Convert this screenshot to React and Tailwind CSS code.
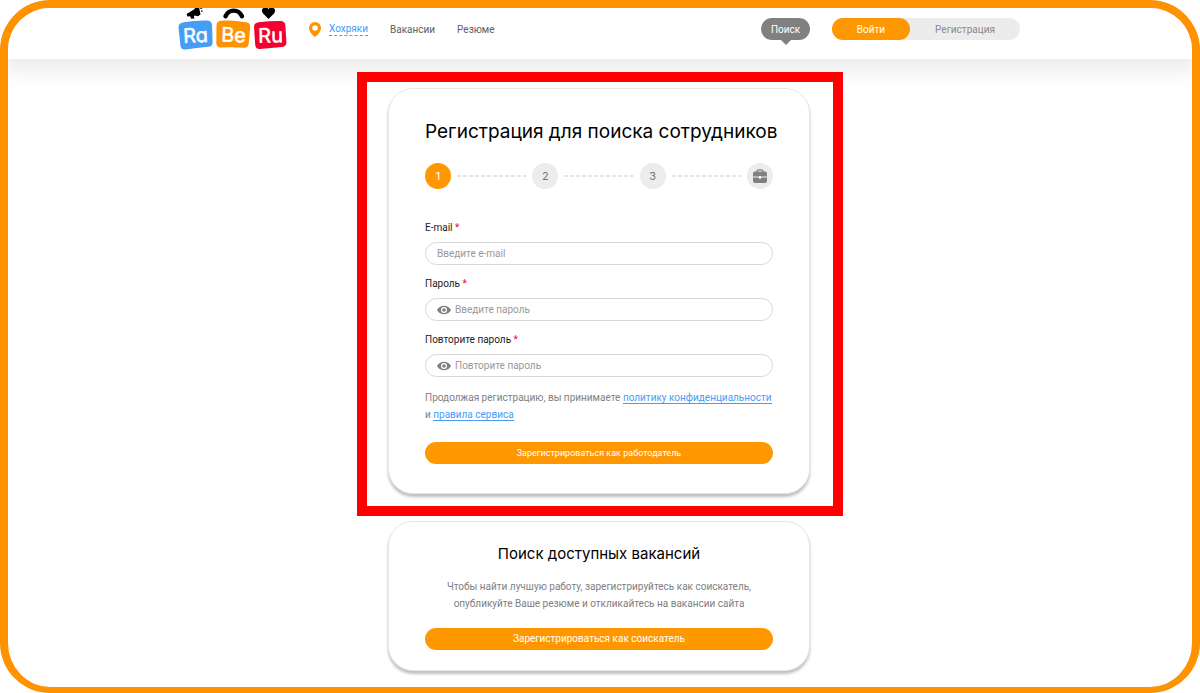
import React from "react";

function Logo() {
  return (
    <a href="#" aria-label="RaBeRu" className="block w-[110px] shrink-0">
      <svg viewBox="1 0 110 42" className="block w-full">
        <g fill="#000">
          <path d="M9.500 6L17 1.500 19 -1h3l1.500 7.500-2.500 1.700-3.500-.7-.6 1 .6 2-3.200.3-1.300-2.600-2.600.3z" />
          <path d="M23.500 .8l1.500-1M24 3.200l1.600 0" stroke="#000" strokeWidth="1.200" />
          <path d="M48.500 8.200C52 .8 61.500 .8 65 8.200" fill="none" stroke="#000" strokeWidth="4.400" strokeLinecap="round" />
          <path d="M91.500 11l-5.400-5.500C83.500 2.500 85.500-.5 88.500-.5c1.500 0 2.500.7 3 1.700.5-1 1.600-1.700 3-1.700 3 0 5 3 2.500 6z" />
        </g>
        <path d="M7 14.200Q18 12.200 30 12.400q4.700 0 5 4.500l.6 17q.2 4.500-4.300 4.900Q19 39.800 8.500 41.400q-4.600.5-5.100-4.200L1.500 19.700Q1 15 7 14.200z" fill="#459df5" />
        <path d="M44.500 12.700Q57 12 69 14.200q4.500.6 4.200 5l-1.500 16.400q-.4 4.400-4.800 4.200Q56 38.900 44 39.500q-4.500.2-4.700-4.400L39.500 17.500q0-4.600 5-4.800z" fill="#ff9200" />
        <path d="M82 14.200Q93 12.700 103.500 12.900q4.600 0 4.900 4.500l1 16.600q.1 4.500-4.300 5Q93.500 39.900 83 41q-4.400.2-4.800-4.300L77 19q-.2-4.300 5-4.800z" fill="#f50031" />
        <g
          fill="#fff"
          stroke="#fff"
          strokeWidth="0.5"
          strokeLinejoin="round"
          fontSize="20"
          fontWeight="400"
          textAnchor="middle"
          className="font-['Inter',sans-serif] [font-feature-settings:'cv11']"
        >
          <text x="18.500" y="34.500" transform="rotate(-3 18 27)">Ra</text>
          <text x="56.500" y="34" transform="rotate(2 56 27)">Be</text>
          <text x="93.500" y="34.500" transform="rotate(-1 93 27)">Ru</text>
        </g>
      </svg>
    </a>
  );
}

function Eye() {
  return (
    <svg viewBox="0 0 14 10" className="w-[14px] shrink-0" aria-hidden="true">
      <path d="M0 5C3-.8 11-.8 14 5 11 10.800 3 10.800 0 5z" fill="#808080" />
      <circle cx="7" cy="5" r="3" fill="#fff" />
      <circle cx="7" cy="5" r="1.800" fill="#808080" />
    </svg>
  );
}

function Field({ id, label, type, placeholder, eye }) {
  return (
    <div className="flex flex-col gap-[5px]">
      <label htmlFor={id} className="text-[10px] leading-[18px] text-[#1c1c24]">
        {label} <span className="text-[#f50031]">*</span>
      </label>
      <div className="flex h-[23px] items-center gap-1 rounded-full border border-[#d8d8d8] px-[11px]">
        {eye && (
          <button type="button" aria-label="Показать пароль">
            <Eye />
          </button>
        )}
        <input
          id={id}
          type={type}
          placeholder={placeholder}
          className="h-4 min-w-0 flex-1 bg-transparent text-[10px] leading-4 outline-none placeholder:text-[#999]"
        />
      </div>
    </div>
  );
}

function Step({ active, children }) {
  return (
    <li
      className={
        active
          ? "flex size-[26px] shrink-0 items-center justify-center rounded-full bg-[#ff9800] font-['Inter',sans-serif] text-[11px] text-white"
          : "flex size-[26px] shrink-0 items-center justify-center rounded-full bg-[#ececec] font-['Inter',sans-serif] text-[11px] text-[#757575]"
      }
    >
      {children}
    </li>
  );
}

function Dashes() {
  return (
    <li aria-hidden="true" className="mx-1.5 flex-1">
      <svg className="block h-[2px] w-full">
        <line x1="0" y1="1" x2="100%" y2="1" stroke="#e4e4e4" strokeWidth="2" strokeDasharray="4 2" />
      </svg>
    </li>
  );
}

function Briefcase() {
  return (
    <svg viewBox="0 0 14 14" className="w-[14px]" aria-label="Работа">
      <path d="M4 3.500V2.500Q4 .8 5.500.8h3Q10 .8 10 2.500v1" fill="none" stroke="#808080" strokeWidth="1.200" />
      <path d="M2 2.600h10q2 0 2 2v3H8.500L7 9 5.500 7.600H0v-3q0-2 2-2z" fill="#808080" />
      <path d="M0 8.600h5L7 10.300l2-1.700h5V12q0 2-2 2H2q-2 0-2-2z" fill="#808080" />
      <path d="M6 7h2v1.200L7 9.200 6 8.200z" fill="#fff" />
    </svg>
  );
}

const card =
  "rounded-[25px] border border-[#e6e6e6] bg-white px-9 shadow-[0_3px_3px_rgba(0,0,0,0.25)]";
const submit =
  "block h-[22px] w-full rounded-full bg-[#ff9800] leading-[22px] text-white";

export default function App() {
  return (
    <div className="flex min-h-screen flex-col overflow-hidden rounded-[50px] border-8 border-b-[6px] border-[#ff9200] bg-white font-['Roboto',sans-serif]">
      <header className="bg-white shadow-[0_6px_20px_6px_rgba(0,0,0,0.08)]">
        <div className="mx-auto flex h-[51px] w-full max-w-[844px] items-start pr-0.5 text-[10px] leading-4 text-[#606060]">
          <Logo />
          <a href="#" className="mt-3.5 ml-[21px] flex items-center gap-2">
            <svg viewBox="0 0 12 15" className="w-3" aria-hidden="true">
              <path fillRule="evenodd" d="M6 0a6 6 0 0 1 6 6c0 3.500-3 6.800-6 9-3-2.200-6-5.500-6-9a6 6 0 0 1 6-6zm0 3.200a2.800 2.800 0 1 0 0 5.600 2.800 2.800 0 0 0 0-5.600z" fill="#ff9200" />
            </svg>
            <span className="border-b border-dashed border-[#459df5] leading-[12px] text-[#459df5]">Хохряки</span>
          </a>
          <nav className="mt-3.5 ml-[22px] flex gap-[22px]">
            <a href="#">Вакансии</a>
            <a href="#">Резюме</a>
          </nav>
          <div className="mt-2.5 ml-auto flex gap-[22px]">
            <button className="relative h-[22px] w-[49px] rounded-full bg-[#808080] pt-px text-white">
              Поиск
              <span className="absolute top-full left-1/2 h-0 w-0 -translate-x-1/2 border-x-[5px] border-t-[5px] border-x-transparent border-t-[#808080]" />
            </button>
            <div className="flex h-[22px] w-[188px] rounded-full bg-[#ececec]">
              <button className="w-[78px] rounded-full bg-[#ff9800] pt-px text-white">Войти</button>
              <button className="flex-1 pt-px text-[#8a8a8a]">Регистрация</button>
            </div>
          </div>
        </div>
      </header>

      <main className="mx-auto flex w-full max-w-[486px] flex-col gap-[5px] pt-[13px] pb-4">
        <div className="relative border-10 border-[#ff0000] bg-white pt-1.5 pr-[23px] pb-3 pl-[21px]">
          <section className={`${card} pt-[29px] pb-[29px]`}>
            <h1 className="font-['Inter',sans-serif] text-[19px] leading-7 whitespace-nowrap text-black">
              Регистрация для поиска сотрудников
            </h1>
            <ol className="mt-[17px] flex items-center">
              <Step active>1</Step>
              <Dashes />
              <Step>2</Step>
              <Dashes />
              <Step>3</Step>
              <Dashes />
              <Step>
                <Briefcase />
              </Step>
            </ol>
            <form className="mt-[30px]" onSubmit={(e) => e.preventDefault()}>
              <div className="flex flex-col gap-2.5">
                <Field id="email" label="E-mail" type="email" placeholder="Введите e-mail" />
                <Field id="password" label="Пароль" type="password" placeholder="Введите пароль" eye />
                <Field id="repeat" label="Повторите пароль" type="password" placeholder="Повторите пароль" eye />
              </div>
              <p className="mt-3 mb-[19px] text-[10px] leading-[17px] text-[#808080]">
                Продолжая регистрацию, вы принимаете{" "}
                <a href="#" className="border-b border-[#459df5] text-[#459df5]">политику конфиденциальности</a>
                <br />и <a href="#" className="border-b border-[#459df5] text-[#459df5]">правила сервиса</a>
              </p>
              <button className={`${submit} text-[9px]`}>Зарегистрироваться как работодатель</button>
            </form>
          </section>
        </div>

        <section className={`${card} mr-[33px] ml-[31px] pt-5 pb-5 text-center`}>
          <h2 className="font-['Inter',sans-serif] text-[15px] leading-6 text-black">Поиск доступных вакансий</h2>
          <p className="mt-3 mb-4 text-[10px] leading-[17px] text-[#808080]">
            Чтобы найти лучшую работу, зарегистрируйтесь как соискатель,
            <br />
            опубликуйте Ваше резюме и откликайтесь на вакансии сайта
          </p>
          <button className={`${submit} text-[10px]`}>Зарегистрироваться как соискатель</button>
        </section>
      </main>
    </div>
  );
}
